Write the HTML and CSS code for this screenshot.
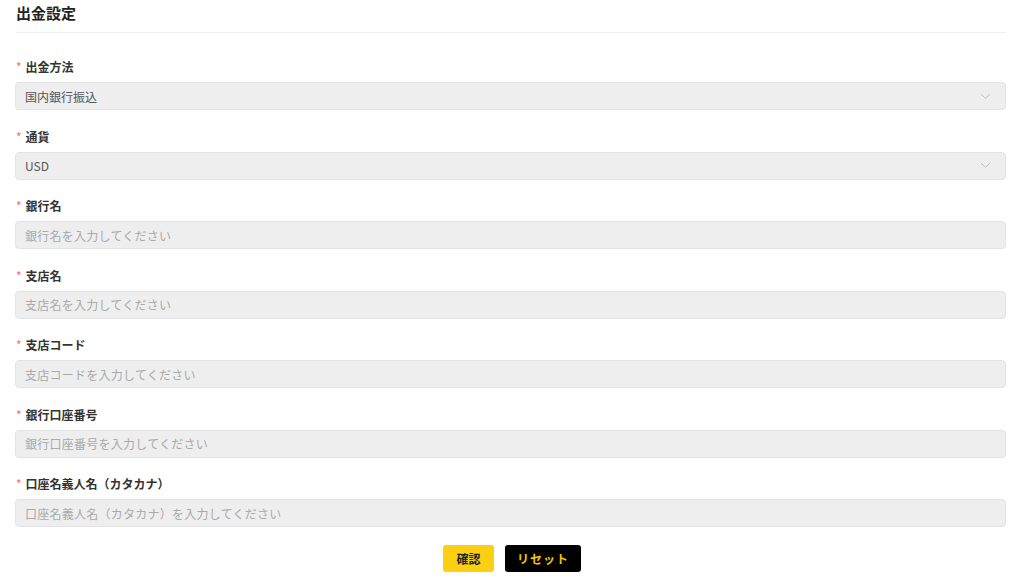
FILE: index.html
```html
<!DOCTYPE html>
<html lang="ja">
<head>
<meta charset="utf-8">
<link rel="stylesheet" href="styles.css">
</head>
<body>
<div class="page">
  <div class="header"><h1 class="title">出金設定</h1></div>
  <form class="form">
    <div class="field">
      <label class="label"><span class="req">*</span>出金方法</label>
      <div class="input select"><span class="value">国内銀行振込</span>
        <svg class="chev" viewBox="0 0 12 8" width="11" height="7"><path d="M1 1.5 L6 6 L11 1.5" fill="none" stroke="#b8b8b8" stroke-width="1"/></svg>
      </div>
    </div>
    <div class="field">
      <label class="label"><span class="req">*</span>通貨</label>
      <div class="input select"><span class="value">USD</span>
        <svg class="chev" viewBox="0 0 12 8" width="11" height="7"><path d="M1 1.5 L6 6 L11 1.5" fill="none" stroke="#b8b8b8" stroke-width="1"/></svg>
      </div>
    </div>
    <div class="field">
      <label class="label"><span class="req">*</span>銀行名</label>
      <div class="input"><span class="ph">銀行名を入力してください</span></div>
    </div>
    <div class="field">
      <label class="label"><span class="req">*</span>支店名</label>
      <div class="input"><span class="ph">支店名を入力してください</span></div>
    </div>
    <div class="field">
      <label class="label"><span class="req">*</span>支店コード</label>
      <div class="input"><span class="ph">支店コードを入力してください</span></div>
    </div>
    <div class="field">
      <label class="label"><span class="req">*</span>銀行口座番号</label>
      <div class="input"><span class="ph">銀行口座番号を入力してください</span></div>
    </div>
    <div class="field">
      <label class="label"><span class="req">*</span>口座名義人名（カタカナ）</label>
      <div class="input"><span class="ph">口座名義人名（カタカナ）を入力してください</span></div>
    </div>
    <div class="actions">
      <button type="button" class="btn btn-yellow">確認</button>
      <button type="button" class="btn btn-black">リセット</button>
    </div>
  </form>
</div>
</body>
</html>
```
FILE: styles.css
```css
html, body {
  margin: 0;
  padding: 0;
  background: #fff;
}
body {
  font-family: "Noto Sans CJK JP", "Noto Sans", sans-serif;
  color: #333;
}
.page {
  padding: 0 18px 0 15px;
}
.header {
  margin-left: 1px;
  height: 33px;
  border-bottom: 1px solid #f0f0f0;
  box-sizing: border-box;
  padding-top: 3px;
}
.title {
  margin: 0;
  font-size: 15px;
  font-weight: 700;
  line-height: 20px;
  color: #222;
}
.form {
  padding-top: 25px;
}
.field {
  margin-bottom: 17.5px;
}
.label {
  display: flex;
  align-items: center;
  height: 17px;
  font-size: 12px;
  font-weight: 700;
  color: #333;
  margin-bottom: 7px;
  padding-left: 1px;
}
.req {
  color: #f56c6c;
  font-weight: 400;
  margin-right: 4px;
  font-size: 12px;
}
.input {
  height: 28px;
  box-sizing: border-box;
  background: #eeeeee;
  border: 1px solid #e3e3e3;
  border-radius: 4px;
  display: flex;
  align-items: center;
  padding: 0 10px 0 9px;
  font-size: 12px;
}
.value {
  color: #555;
  flex: 1;
}
.ph {
  color: #aaa;
  letter-spacing: 0.25px;
}
.chev {
  margin-right: 4px;
}
.actions {
  display: flex;
  justify-content: center;
  gap: 11px;
  padding-left: 3px;
}
.btn {
  height: 27px;
  border-radius: 3px;
  border: none;
  font-family: inherit;
  font-size: 12px;
  font-weight: 700;
  padding: 0;
  cursor: pointer;
}
.btn-yellow {
  width: 51px;
  background: #fcd012;
  color: #222;
}
.btn-black {
  width: 76px;
  background: #000;
  color: #f5c400;
  letter-spacing: 1px;
}
```
